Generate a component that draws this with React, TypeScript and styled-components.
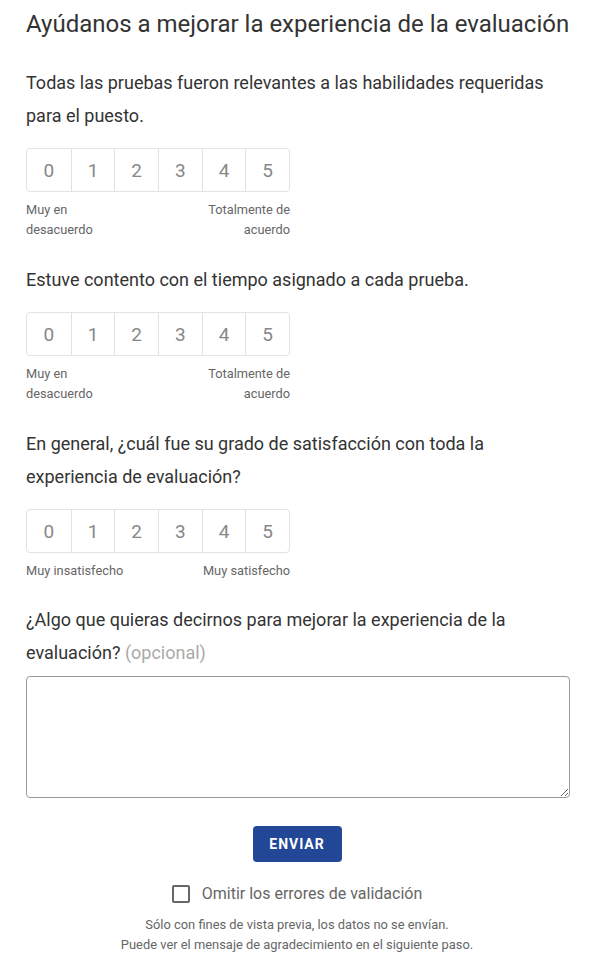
import React from "react";
import styled, { createGlobalStyle } from "styled-components";

const Global = createGlobalStyle`
  html, body { margin: 0; padding: 0; background: #fff; }
  body { font-family: Roboto, "Noto Sans", sans-serif; color: #333; }
  * { box-sizing: border-box; }
`;

const Page = styled.main`
  width: 592px;
  padding: 6px 24px 0 26px;
  display: flex;
  flex-direction: column;
`;

const Title = styled.h1`
  margin: 0;
  font-size: 24px;
  line-height: 36px;
  font-weight: 400;
  color: #333;
  white-space: nowrap;
`;

const Question = styled.section<{ $top: number }>`
  margin-top: ${(p) => p.$top}px;
  display: flex;
  flex-direction: column;
`;

const QuestionText = styled.p`
  margin: 0;
  font-size: 18px;
  line-height: 33px;
  color: #333;
`;

const Optional = styled.span`
  color: #aaa;
`;

const Scale = styled.div`
  margin-top: 16px;
  width: 264px;
  height: 44px;
  display: grid;
  grid-template-columns: repeat(6, 1fr);
  border: 1px solid #e2e2e2;
  border-radius: 4px;
  overflow: hidden;
`;

const Cell = styled.button`
  all: unset;
  display: flex;
  align-items: center;
  justify-content: center;
  font-family: Roboto, sans-serif;
  font-size: 19px;
  color: #888;
  border-left: 1px solid #e2e2e2;
  &:first-child { border-left: none; }
`;

const Labels = styled.div`
  margin-top: 8px;
  width: 264px;
  display: flex;
  justify-content: space-between;
  font-size: 12.8px;
  line-height: 20px;
  color: #666;
`;

const Label = styled.span<{ $right?: boolean; $narrow?: boolean }>`
  max-width: ${(p) => (p.$narrow ? "90px" : "none")};
  text-align: ${(p) => (p.$right ? "right" : "left")};
`;

const TextArea = styled.textarea`
  margin-top: 7px;
  width: 544px;
  height: 122px;
  border: 1px solid #999;
  border-radius: 4px;
  resize: vertical;
  font-family: Roboto, sans-serif;
  font-size: 16px;
`;

const Footer = styled.div`
  margin-top: 28px;
  display: flex;
  flex-direction: column;
  align-items: center;
`;

const SubmitButton = styled.button`
  width: 89px;
  height: 36px;
  border: none;
  border-radius: 4px;
  background: #234797;
  color: #fff;
  font-family: Roboto, sans-serif;
  font-weight: 700;
  font-size: 14px;
  letter-spacing: 1px;
  cursor: pointer;
`;

const CheckRow = styled.label`
  margin-top: 21px;
  display: flex;
  align-items: center;
  gap: 12px;
  font-size: 16px;
  color: #666;
  line-height: 22px;
`;

const Box = styled.span`
  width: 18px;
  height: 18px;
  border: 2px solid #666;
  border-radius: 2px;
`;

const Note = styled.p`
  margin: 10px 0 0;
  text-align: center;
  font-size: 12.9px;
  line-height: 20px;
  color: #666;
`;

type Q = { text: React.ReactNode; left: string; right: string; narrow: boolean; top: number };

const questions: Q[] = [
  {
    text: "Todas las pruebas fueron relevantes a las habilidades requeridas para el puesto.",
    left: "Muy en desacuerdo",
    right: "Totalmente de acuerdo",
    narrow: true,
    top: 24,
  },
  {
    text: "Estuve contento con el tiempo asignado a cada prueba.",
    left: "Muy en desacuerdo",
    right: "Totalmente de acuerdo",
    narrow: true,
    top: 23,
  },
  {
    text: "En general, ¿cuál fue su grado de satisfacción con toda la experiencia de evaluación?",
    left: "Muy insatisfecho",
    right: "Muy satisfecho",
    narrow: false,
    top: 23,
  },
];

export default function App() {
  return (
    <>
      <Global />
      <Page>
        <Title>Ayúdanos a mejorar la experiencia de la evaluación</Title>
        {questions.map((q, i) => (
          <Question key={i} $top={q.top}>
            <QuestionText>{q.text}</QuestionText>
            <Scale>
              {[0, 1, 2, 3, 4, 5].map((n) => (
                <Cell key={n}>{n}</Cell>
              ))}
            </Scale>
            <Labels>
              <Label $narrow={q.narrow}>{q.left}</Label>
              <Label $narrow={q.narrow} $right>
                {q.right}
              </Label>
            </Labels>
          </Question>
        ))}
        <Question $top={22}>
          <QuestionText>
            ¿Algo que quieras decirnos para mejorar la experiencia de la evaluación?{" "}
            <Optional>(opcional)</Optional>
          </QuestionText>
          <TextArea />
        </Question>
        <Footer>
          <SubmitButton>ENVIAR</SubmitButton>
          <CheckRow>
            <Box />
            Omitir los errores de validación
          </CheckRow>
          <Note>
            Sólo con fines de vista previa, los datos no se envían.
            <br />
            Puede ver el mensaje de agradecimiento en el siguiente paso.
          </Note>
        </Footer>
      </Page>
    </>
  );
}
